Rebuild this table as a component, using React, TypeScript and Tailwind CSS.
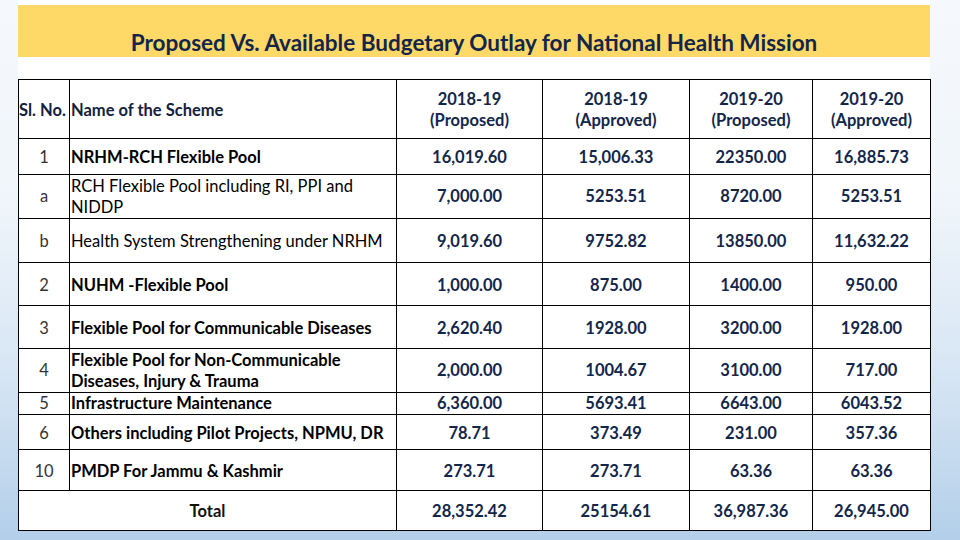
import React from "react";

type Row = {
  no: string;
  name: React.ReactNode;
  bold: boolean;
  vals: string[];
  h: number;
  tight?: boolean;
};

const rows: Row[] = [
  { no: "1", name: "NRHM-RCH Flexible Pool", bold: true, vals: ["16,019.60", "15,006.33", "22350.00", "16,885.73"], h: 36 },
  {
    no: "a",
    name: (
      <>
        RCH Flexible Pool including RI, PPI and
        <br />
        NIDDP
      </>
    ),
    bold: false,
    vals: ["7,000.00", "5253.51", "8720.00", "5253.51"],
    h: 44,
    tight: true,
  },
  { no: "b", name: "Health System Strengthening under NRHM", bold: false, vals: ["9,019.60", "9752.82", "13850.00", "11,632.22"], h: 44 },
  { no: "2", name: "NUHM -Flexible Pool", bold: true, vals: ["1,000.00", "875.00", "1400.00", "950.00"], h: 43 },
  { no: "3", name: "Flexible Pool for Communicable Diseases", bold: true, vals: ["2,620.40", "1928.00", "3200.00", "1928.00"], h: 43 },
  {
    no: "4",
    name: (
      <>
        Flexible Pool for Non-Communicable
        <br />
        Diseases, Injury &amp; Trauma
      </>
    ),
    bold: true,
    vals: ["2,000.00", "1004.67", "3100.00", "717.00"],
    h: 44,
    tight: true,
  },
  { no: "5", name: "Infrastructure Maintenance", bold: true, vals: ["6,360.00", "5693.41", "6643.00", "6043.52"], h: 22, tight: true },
  { no: "6", name: "Others including Pilot Projects, NPMU, DR", bold: true, vals: ["78.71", "373.49", "231.00", "357.36"], h: 35 },
  { no: "10", name: "PMDP For Jammu & Kashmir", bold: true, vals: ["273.71", "273.71", "63.36", "63.36"], h: 41 },
];

const headers = [
  ["2018-19", "(Proposed)"],
  ["2018-19", "(Approved)"],
  ["2019-20", "(Proposed)"],
  ["2019-20", "(Approved)"],
];

export default function App() {
  return (
    <div
      className="w-[960px] h-[540px] overflow-hidden bg-[linear-gradient(180deg,#f5f8fc_0%,#f1f6fb_35%,#d6e5f4_70%,#b3cfe9_100%)]"
      style={{ fontFamily: "Lato, 'Open Sans', sans-serif" }}
    >
      <div className="ml-[18px] w-[912px] flex flex-col">
        <div className="h-[5px] bg-white" />
        <div className="h-[52px] bg-[#fed968] flex items-end justify-center pb-[1px]">
          <h1 className="text-[22.5px] font-bold text-[#13264a] leading-[26px]">
            Proposed Vs. Available Budgetary Outlay for National Health Mission
          </h1>
        </div>
        <div className="h-[22px] bg-white" />
        <table className="table-fixed border-collapse bg-white w-[912px] text-[16.5px] leading-[21px]">
          <colgroup>
            <col className="w-[51px]" />
            <col className="w-[327px]" />
            <col className="w-[146px]" />
            <col className="w-[147px]" />
            <col className="w-[123px]" />
            <col className="w-[118px]" />
          </colgroup>
          <thead>
            <tr className="h-[59px]">
              <th className="border border-black p-0 pt-[2px] text-left font-bold text-[#14213d] whitespace-nowrap">Sl. No.</th>
              <th className="border border-black p-0 pt-[2px] pl-[1px] text-left font-bold text-[#14213d]">Name of the Scheme</th>
              {headers.map((h, i) => (
                <th key={i} className="border border-black p-0 pt-[2px] text-center font-bold text-[#13264a]">
                  {h[0]}
                  <br />
                  {h[1]}
                </th>
              ))}
            </tr>
          </thead>
          <tbody>
            {rows.map((r, i) => {
              const pad = r.tight ? "pt-0" : "pt-[2px]";
              return (
                <tr key={i} style={{ height: r.h }}>
                  <td className={`border border-black p-0 ${pad} text-center text-[#333333]`}>{r.no}</td>
                  <td className={`border border-black p-0 ${pad} pl-[1px] text-left text-black whitespace-nowrap ${r.bold ? "font-bold" : "font-normal"}`}>{r.name}</td>
                  {r.vals.map((v, j) => (
                    <td key={j} className={`border border-black p-0 ${pad} text-center font-bold text-[#13264a]`}>
                      {v}
                    </td>
                  ))}
                </tr>
              );
            })}
            <tr className="h-[40px]">
              <td colSpan={2} className="border border-black p-0 pt-[2px] text-center font-bold text-[#111]">
                Total
              </td>
              {["28,352.42", "25154.61", "36,987.36", "26,945.00"].map((v, j) => (
                <td key={j} className="border border-black p-0 pt-[2px] text-center font-bold text-[#13264a]">
                  {v}
                </td>
              ))}
            </tr>
          </tbody>
        </table>
      </div>
    </div>
  );
}
